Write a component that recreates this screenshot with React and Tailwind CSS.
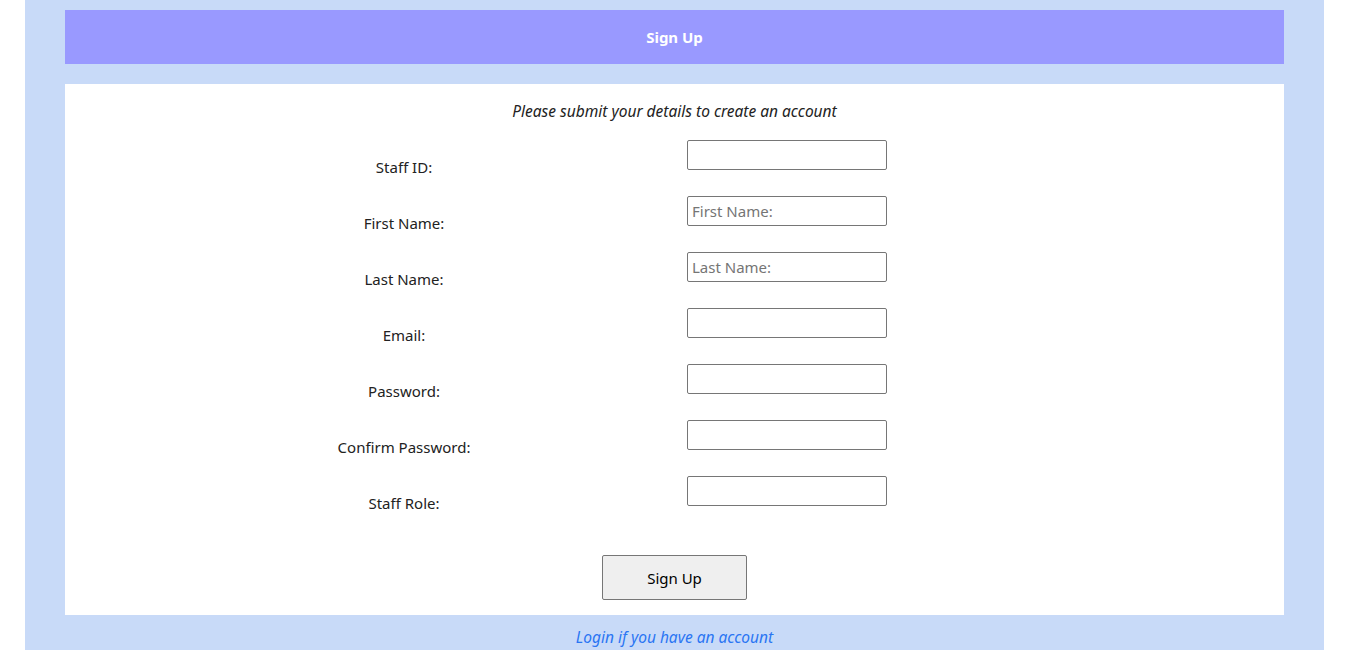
const FIELDS = [
  { label: 'Staff ID:', placeholder: '' },
  { label: 'First Name:', placeholder: 'First Name:' },
  { label: 'Last Name:', placeholder: 'Last Name:' },
  { label: 'Email:', placeholder: '' },
  { label: 'Password:', placeholder: '' },
  { label: 'Confirm Password:', placeholder: '' },
  { label: 'Staff Role:', placeholder: '' },
]

export default function App() {
  return (
    <div className="min-h-[650px] bg-white font-['Noto_Sans',sans-serif] text-[15px] text-[#222]">
      <div className="mx-[25px] h-[650px] bg-[#c8daf8] px-10 pt-[10px]">
        {/* Header */}
        <div className="flex h-[54px] items-center justify-center bg-[#9999ff] font-bold text-white">
          Sign Up
        </div>

        {/* Form panel */}
        <div className="mt-5 h-[531px] bg-white">
          <p className="pt-[15px] text-center text-[15.5px] italic leading-[24px]">
            Please submit your details to create an account
          </p>

          <div className="mt-[17px] grid grid-cols-[260px_200px] gap-x-[153px] pl-[209px]">
            {FIELDS.map((f) => (
              <div key={f.label} className="contents">
                <label className="h-[56px] pt-[17px] text-center leading-[20px]">{f.label}</label>
                <div className="h-[56px]">
                  <input
                    type="text"
                    placeholder={f.placeholder}
                    className="h-[30px] w-[200px] rounded-[2px] border border-[#767676] px-1 text-[15px] placeholder:text-[#757575]"
                  />
                </div>
              </div>
            ))}
          </div>

          <div className="mt-[23px] flex justify-center">
            <button className="h-[45px] w-[145px] rounded-[2px] border border-[#767676] bg-[#efefef] pt-px text-[15px] text-black">
              Sign Up
            </button>
          </div>
        </div>

        <div className="pt-[11px] text-center">
          <a href="#" className="text-[15.5px] italic text-[#2a75f3]">Login if you have an account</a>
        </div>
      </div>
    </div>
  )
}
